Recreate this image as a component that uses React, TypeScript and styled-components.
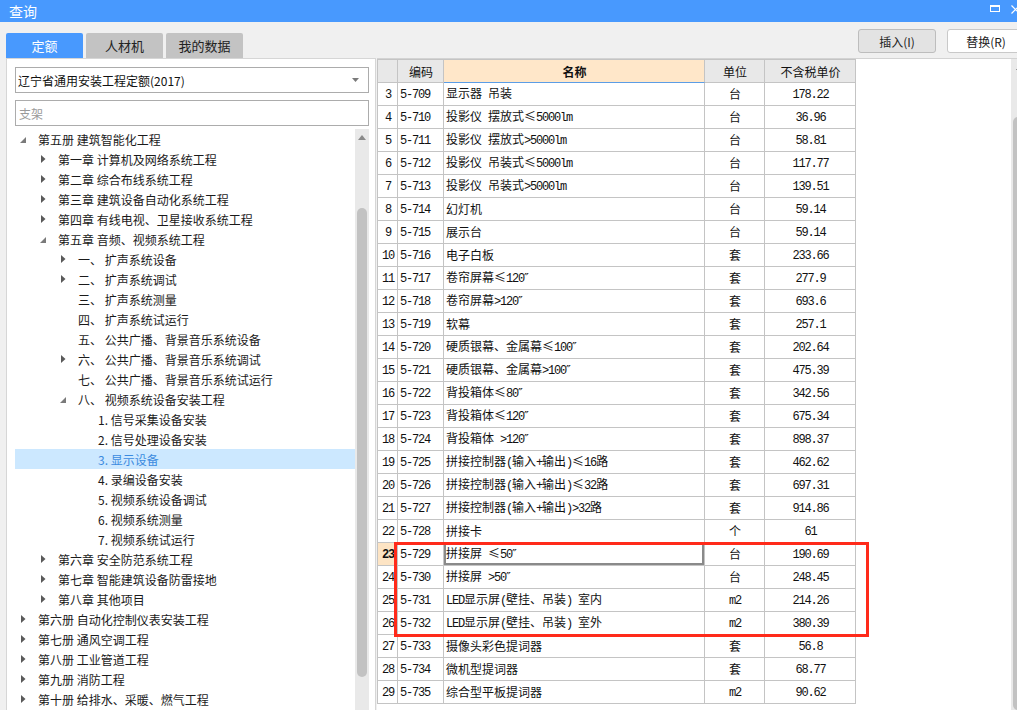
import React from 'react';
import styled, { createGlobalStyle } from 'styled-components';

const GlobalStyle = createGlobalStyle`
  html, body {
    margin: 0;
    padding: 0;
    overflow: hidden;
    background: #f0f0f0;
  }
  body {
    font-family: "Noto Sans CJK SC", "Microsoft YaHei", sans-serif;
    font-size: 12px;
    color: #1a1a1a;
  }
`;

const Window = styled.div`
  width: 1028px;
  height: 710px;
  overflow: hidden;
  display: flex;
  flex-direction: column;
  background: #f0f0f0;
`;

const TitleBar = styled.div`
  flex: none;
  height: 22px;
  background: #4899fe;
  color: #fff;
  display: flex;
  align-items: center;
  padding: 0 8px 0 9px;
  font-size: 14px;
`;

const TitleText = styled.span`
  flex: 1;
  line-height: 1;
`;

const WinButtons = styled.div`
  display: flex;
  align-items: center;
  gap: 11px;
`;

const MaxIcon = styled.div`
  width: 10px;
  height: 7px;
  box-sizing: border-box;
  border: 1px solid #fff;
  border-top-width: 2px;
  margin-top: -6px;
`;

const Main = styled.div`
  flex: 1;
  min-height: 0;
  display: grid;
  grid-template-columns: 370px 651px;
  grid-template-rows: 36px 1fr;
  grid-template-areas: "tabs tools" "panel table";
  column-gap: 1px;
  padding-left: 6px;
`;

const Tabs = styled.div`
  grid-area: tabs;
  display: flex;
  align-items: flex-end;
  gap: 3px;
`;

const Tab = styled.div<{ $active?: boolean }>`
  width: 77px;
  height: 25px;
  display: flex;
  align-items: center;
  justify-content: center;
  border-radius: 2px 2px 0 0;
  font-size: 13px;
  background: ${({ $active }) => ($active ? '#4899fe' : '#c3c3c3')};
  color: ${({ $active }) => ($active ? '#fff' : '#222')};
`;

const Tools = styled.div`
  grid-area: tools;
  display: flex;
  justify-content: flex-end;
  align-items: flex-start;
  gap: 11px;
  padding: 7px 3px 0 0;
`;

const ToolButton = styled.div<{ $light?: boolean }>`
  width: 78px;
  height: 24px;
  box-sizing: border-box;
  display: flex;
  align-items: center;
  justify-content: center;
  border-radius: 3px;
  font-size: 12px;
  color: #222;
  background: ${({ $light }) => ($light ? '#fff' : '#e3e3e3')};
  border: 1px solid ${({ $light }) => ($light ? '#c9c9c9' : '#bdbdbd')};
`;

const Panel = styled.div`
  grid-area: panel;
  background: #fff;
  border: 1px solid #d6d6d6;
  border-bottom: none;
  padding: 8px 6px 0 8px;
  display: flex;
  flex-direction: column;
  overflow: hidden;
  min-height: 0;
`;

const Select = styled.div`
  flex: none;
  height: 26px;
  box-sizing: border-box;
  border: 1px solid #acacac;
  display: flex;
  align-items: center;
  padding: 0 9px 0 2px;
  font-size: 12px;
  color: #111;
`;

const SelectText = styled.span`
  flex: 1;
`;

const SearchInput = styled.input`
  flex: none;
  height: 26px;
  margin-top: 7px;
  box-sizing: border-box;
  border: 1px solid #acacac;
  padding: 0 3px;
  font-family: inherit;
  font-size: 12px;
  outline: none;
  &::placeholder {
    color: #9a9a9a;
  }
`;

const TreeBox = styled.div`
  flex: 1;
  min-height: 0;
  margin-top: 3px;
  display: flex;
  overflow: hidden;
`;

const TreeList = styled.div`
  flex: 1;
  display: flex;
  flex-direction: column;
`;

const TreeRow = styled.div<{ $level: number; $selected?: boolean }>`
  flex: none;
  height: 20px;
  display: flex;
  align-items: center;
  padding-left: ${({ $level }) => $level * 20}px;
  white-space: pre;
  background: ${({ $selected }) => ($selected ? '#cce8ff' : 'transparent')};
  color: ${({ $selected }) => ($selected ? '#3b8be0' : '#1a1a1a')};
`;

const Toggle = styled.span`
  width: 16px;
  height: 20px;
  margin-right: 7px;
  display: flex;
  align-items: center;
  justify-content: center;
`;

const VScroll = styled.div<{ $width: number }>`
  flex: none;
  width: ${({ $width }) => $width}px;
  background: #e9e9e9;
  display: flex;
  flex-direction: column;
  align-items: center;
`;

const ScrollArrow = styled.div<{ $h: number }>`
  height: ${({ $h }) => $h}px;
  display: flex;
  align-items: center;
  justify-content: center;
`;

const Thumb = styled.div<{ $top: number; $h: number; $w: number }>`
  margin-top: ${({ $top }) => $top}px;
  height: ${({ $h }) => $h}px;
  width: ${({ $w }) => $w}px;
  border-radius: 5px;
  background: #c2c2c2;
`;

const TableArea = styled.div`
  grid-area: table;
  background: #fff;
  border-top: 1px solid #d3d3d3;
  display: flex;
  min-height: 0;
  overflow: hidden;
`;

const GridWrap = styled.div`
  flex: 1;
  position: relative;
`;

const Grid = styled.div`
  width: 479px;
  box-sizing: border-box;
  border-left: 1px solid #c4c4c4;
  border-top: 1px solid #c4c4c4;
`;

const Row = styled.div`
  display: grid;
  grid-template-columns: 20px 46px 261px 60px 91px;
`;

const Cell = styled.div<{ $align?: 'left' | 'center'; $bg?: string; $bold?: boolean; $focus?: boolean }>`
  height: 23px;
  box-sizing: border-box;
  border-right: 1px solid #c4c4c4;
  border-bottom: 1px solid #c4c4c4;
  display: flex;
  align-items: center;
  justify-content: ${({ $align }) => ($align === 'left' ? 'flex-start' : 'center')};
  padding: 0 1px 0 2px;
  white-space: pre;
  overflow: hidden;
  font-size: 12px;
  color: #111;
  background: ${({ $bg }) => $bg || '#fff'};
  font-weight: ${({ $bold }) => ($bold ? 700 : 400)};
  box-shadow: ${({ $focus }) => ($focus ? 'inset 0 0 0 2px #8a8a8a' : 'none')};
`;

const CellText = styled.span`
  line-height: 16px;
`;

const HeadCell = styled(Cell)<{ $accent?: boolean }>`
  background: ${({ $accent }) => ($accent ? '#ffe7c9' : '#e8e8e8')};
  border-bottom-color: ${({ $accent }) => ($accent ? '#5b9de6' : '#c4c4c4')};
  font-weight: ${({ $accent }) => ($accent ? 700 : 400)};
`;

const Latin = styled.span`
  font-family: "Liberation Mono", monospace;
  letter-spacing: -1.2px;
`;

const Quote = styled.span`
  font-family: "DejaVu Sans", sans-serif;
  font-size: 13px;
  letter-spacing: 1px;
`;

const Highlight = styled.div`
  position: absolute;
  left: 17px;
  top: 483px;
  width: 475px;
  height: 95px;
  box-sizing: border-box;
  border: 3px solid #ff2a1a;
  pointer-events: none;
`;

type TreeNode = {
  label: string;
  level: number;
  state: 'open' | 'closed' | 'leaf';
  selected?: boolean;
};

const tree: TreeNode[] = [
  { label: '第五册 建筑智能化工程', level: 0, state: 'open' },
  { label: '第一章 计算机及网络系统工程', level: 1, state: 'closed' },
  { label: '第二章 综合布线系统工程', level: 1, state: 'closed' },
  { label: '第三章 建筑设备自动化系统工程', level: 1, state: 'closed' },
  { label: '第四章 有线电视、卫星接收系统工程', level: 1, state: 'closed' },
  { label: '第五章 音频、视频系统工程', level: 1, state: 'open' },
  { label: '一、 扩声系统设备', level: 2, state: 'closed' },
  { label: '二、 扩声系统调试', level: 2, state: 'closed' },
  { label: '三、 扩声系统测量', level: 2, state: 'leaf' },
  { label: '四、 扩声系统试运行', level: 2, state: 'leaf' },
  { label: '五、 公共广播、背景音乐系统设备', level: 2, state: 'leaf' },
  { label: '六、 公共广播、背景音乐系统调试', level: 2, state: 'closed' },
  { label: '七、 公共广播、背景音乐系统试运行', level: 2, state: 'leaf' },
  { label: '八、 视频系统设备安装工程', level: 2, state: 'open' },
  { label: '1. 信号采集设备安装', level: 3, state: 'leaf' },
  { label: '2. 信号处理设备安装', level: 3, state: 'leaf' },
  { label: '3. 显示设备', level: 3, state: 'leaf', selected: true },
  { label: '4. 录编设备安装', level: 3, state: 'leaf' },
  { label: '5. 视频系统设备调试', level: 3, state: 'leaf' },
  { label: '6. 视频系统测量', level: 3, state: 'leaf' },
  { label: '7. 视频系统试运行', level: 3, state: 'leaf' },
  { label: '第六章 安全防范系统工程', level: 1, state: 'closed' },
  { label: '第七章 智能建筑设备防雷接地', level: 1, state: 'closed' },
  { label: '第八章 其他项目', level: 1, state: 'closed' },
  { label: '第六册 自动化控制仪表安装工程', level: 0, state: 'closed' },
  { label: '第七册 通风空调工程', level: 0, state: 'closed' },
  { label: '第八册 工业管道工程', level: 0, state: 'closed' },
  { label: '第九册 消防工程', level: 0, state: 'closed' },
  { label: '第十册 给排水、采暖、燃气工程', level: 0, state: 'closed' },
];

// [row no, code, name, unit, price]
const rows: string[][] = [
  ['3', '5-709', '显示器 吊装', '台', '178.22'],
  ['4', '5-710', '投影仪 摆放式≤5000lm', '台', '36.96'],
  ['5', '5-711', '投影仪 摆放式>5000lm', '台', '58.81'],
  ['6', '5-712', '投影仪 吊装式≤5000lm', '台', '117.77'],
  ['7', '5-713', '投影仪 吊装式>5000lm', '台', '139.51'],
  ['8', '5-714', '幻灯机', '台', '59.14'],
  ['9', '5-715', '展示台', '台', '59.14'],
  ['10', '5-716', '电子白板', '套', '233.66'],
  ['11', '5-717', '卷帘屏幕≤120″', '套', '277.9'],
  ['12', '5-718', '卷帘屏幕>120″', '套', '693.6'],
  ['13', '5-719', '软幕', '套', '257.1'],
  ['14', '5-720', '硬质银幕、金属幕≤100″', '套', '202.64'],
  ['15', '5-721', '硬质银幕、金属幕>100″', '套', '475.39'],
  ['16', '5-722', '背投箱体≤80″', '套', '342.56'],
  ['17', '5-723', '背投箱体≤120″', '套', '675.34'],
  ['18', '5-724', '背投箱体 >120″', '套', '898.37'],
  ['19', '5-725', '拼接控制器(输入+输出)≤16路', '套', '462.62'],
  ['20', '5-726', '拼接控制器(输入+输出)≤32路', '套', '697.31'],
  ['21', '5-727', '拼接控制器(输入+输出)>32路', '套', '914.86'],
  ['22', '5-728', '拼接卡', '个', '61'],
  ['23', '5-729', '拼接屏 ≤50″', '台', '190.69'],
  ['24', '5-730', '拼接屏 >50″', '台', '248.45'],
  ['25', '5-731', 'LED显示屏(壁挂、吊装) 室内', 'm2', '214.26'],
  ['26', '5-732', 'LED显示屏(壁挂、吊装) 室外', 'm2', '380.39'],
  ['27', '5-733', '摄像头彩色提词器', '套', '56.8'],
  ['28', '5-734', '微机型提词器', '套', '68.77'],
  ['29', '5-735', '综合型平板提词器', 'm2', '90.62'],
];

const Mixed = ({ text }: { text: string }) => (
  <CellText>
    {text.split(/([\x20-\x7e]+|″)/).map((part, i) => {
      if (part === '″') return <Quote key={i}>″</Quote>;
      return /^[\x20-\x7e]+$/.test(part) ? <Latin key={i}>{part}</Latin> : part;
    })}
  </CellText>
);

const Arrow = ({ state }: { state: TreeNode['state'] }) => {
  if (state === 'closed') {
    return (
      <svg width="5" height="8" viewBox="0 0 5 8">
        <polygon points="0,0 4.5,4 0,8" fill="#5a5a5a" />
      </svg>
    );
  }
  if (state === 'open') {
    return (
      <svg width="6" height="6" viewBox="0 0 6 6" style={{ marginTop: 2 }}>
        <polygon points="6,0 6,6 0,6" fill="#7a7a7a" />
      </svg>
    );
  }
  return null;
};

const UpTriangle = ({ color }: { color: string }) => (
  <svg width="8" height="5" viewBox="0 0 8 5">
    <polygon points="4,0 8,5 0,5" fill={color} />
  </svg>
);

export default function App() {
  return (
    <Window>
      <GlobalStyle />
      <TitleBar>
        <TitleText>查询</TitleText>
        <WinButtons>
          <MaxIcon />
          <svg width="9" height="9" viewBox="0 0 9 9" style={{ marginTop: -4 }}>
            <path d="M0.5 0.5 L8.5 8.5 M8.5 0.5 L0.5 8.5" stroke="#fff" strokeWidth="1.2" />
          </svg>
        </WinButtons>
      </TitleBar>
      <Main>
        <Tabs>
          <Tab $active>定额</Tab>
          <Tab>人材机</Tab>
          <Tab>我的数据</Tab>
        </Tabs>
        <Tools>
          <ToolButton>插入(I)</ToolButton>
          <ToolButton $light>替换(R)</ToolButton>
        </Tools>
        <Panel>
          <Select>
            <SelectText>辽宁省通用安装工程定额(2017)</SelectText>
            <svg width="7" height="4" viewBox="0 0 7 4">
              <polygon points="0,0 7,0 3.5,4" fill="#7a7a7a" />
            </svg>
          </Select>
          <SearchInput placeholder="支架" />
          <TreeBox>
            <TreeList>
              {tree.map((n, i) => (
                <TreeRow key={i} $level={n.level} $selected={n.selected}>
                  <Toggle>
                    <Arrow state={n.state} />
                  </Toggle>
                  {n.label}
                </TreeRow>
              ))}
            </TreeList>
            <VScroll $width={14}>
              <ScrollArrow $h={16}>
                <UpTriangle color="#8a8a8a" />
              </ScrollArrow>
              <Thumb $top={63} $h={469} $w={10} />
            </VScroll>
          </TreeBox>
        </Panel>
        <TableArea>
          <GridWrap>
            <Grid>
              <Row>
                <HeadCell />
                <HeadCell>编码</HeadCell>
                <HeadCell $accent>名称</HeadCell>
                <HeadCell>单位</HeadCell>
                <HeadCell>不含税单价</HeadCell>
              </Row>
              {rows.map(([no, code, name, unit, price]) => {
                const current = no === '23';
                return (
                  <Row key={no}>
                    <Cell $bg={current ? '#fde4c4' : undefined} $bold={current}>
                      <Mixed text={no} />
                    </Cell>
                    <Cell $align="left">
                      <Mixed text={code} />
                    </Cell>
                    <Cell $align="left" $focus={current}>
                      <Mixed text={name} />
                    </Cell>
                    <Cell>
                      <Mixed text={unit} />
                    </Cell>
                    <Cell>
                      <Mixed text={price} />
                    </Cell>
                  </Row>
                );
              })}
            </Grid>
            <Highlight />
          </GridWrap>
          <VScroll $width={17}>
            <ScrollArrow $h={17}>
              <UpTriangle color="#606060" />
            </ScrollArrow>
            <Thumb $top={41} $h={600} $w={13} />
          </VScroll>
        </TableArea>
      </Main>
    </Window>
  );
}
